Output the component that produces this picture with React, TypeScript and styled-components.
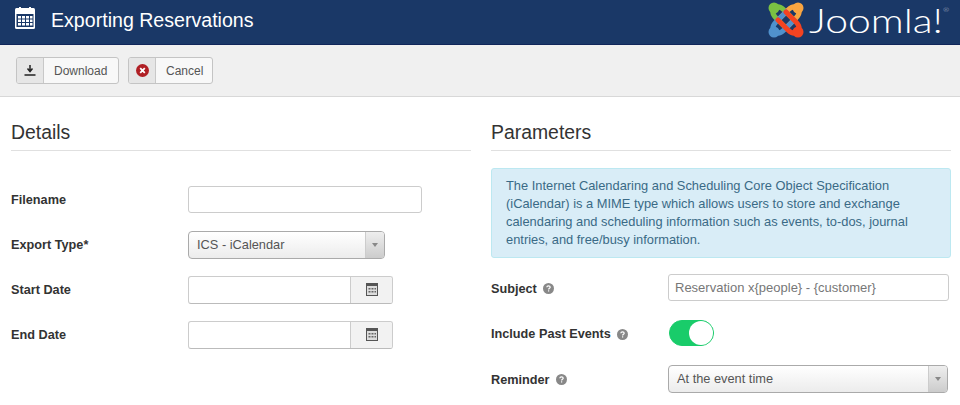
import React from "react";
import styled, { createGlobalStyle } from "styled-components";

const GlobalStyle = createGlobalStyle`
    html, body {
        margin: 0;
        padding: 0;
        background: #fff;
        overflow: hidden;
    }
    body {
        font-family: "Liberation Sans", Arial, sans-serif;
        font-size: 13px;
        color: #333;
    }
`;

const Page = styled.div`
    width: 960px;
    height: 405px;
    overflow: hidden;
`;

const Header = styled.header`
    height: 44px;
    background: #1a3867;
    border-bottom: 1px solid #10265a;
    display: flex;
    align-items: center;
    padding: 0 11px 0 15px;
`;

const PageIcon = styled.svg`
    width: 20px;
    height: 22px;
    margin-right: 16px;
    margin-top: -8px;
`;

const PageTitle = styled.h1`
    margin: -3px 0 0;
    font-size: 19.6px;
    font-weight: 400;
    color: #fff;
    flex: 1;
`;

const Logo = styled.div`
    display: flex;
    align-items: center;
    width: 181px;
    gap: 5px;
    margin-top: -5px;
`;

const LogoWord = styled.span`
    font-family: "Lato", sans-serif;
    font-weight: 300;
    font-size: 33px;
    line-height: 36px;
    color: #fff;
    position: relative;
    display: inline-block;
    transform: scaleX(1.24);
    transform-origin: left center;
`;

const LogoMark = styled.span`
    font-size: 6px;
    position: absolute;
    top: 5px;
    right: -5px;
    line-height: 1;
    color: #ccd;
`;

const Toolbar = styled.div`
    height: 52px;
    box-sizing: border-box;
    background: #f0f0f0;
    border-bottom: 1px solid #d8d8d8;
    display: flex;
    align-items: flex-start;
    gap: 9px;
    padding: 12px 16px 0;
`;

const ToolButton = styled.div<{ $width: number }>`
    width: ${(p) => p.$width}px;
    height: 27px;
    box-sizing: border-box;
    display: flex;
    background: #f8f8f8;
    border: 1px solid #c4c4c4;
    border-radius: 3px;
    font-size: 12px;
    color: #555;
`;

const ToolIcon = styled.span`
    width: 27px;
    box-sizing: border-box;
    display: flex;
    align-items: center;
    justify-content: center;
    background: #e6e6e6;
    border-right: 1px solid #c8c8c8;
    border-radius: 2px 0 0 2px;
`;

const ToolLabel = styled.span`
    display: flex;
    align-items: center;
    padding-left: 10px;
`;

const Columns = styled.main`
    display: grid;
    grid-template-columns: 460px 460px;
    column-gap: 20px;
    padding: 0 9px 0 11px;
`;

const Column = styled.section``;

const SectionTitle = styled.h2`
    margin: 0;
    height: 54px;
    box-sizing: border-box;
    padding-top: 24px;
    font-size: 19.4px;
    line-height: 22px;
    font-weight: 400;
    color: #333;
    border-bottom: 1px solid #e0e0e0;
`;

const DetailFields = styled.div`
    padding-top: 35px;
    display: flex;
    flex-direction: column;
    gap: 18px;
`;

const Field = styled.div`
    display: flex;
    align-items: center;
    height: 27px;
`;

const Label = styled.label<{ $width: number }>`
    width: ${(p) => p.$width}px;
    flex: none;
    font-size: 12.7px;
    font-weight: 700;
    color: #333;
    display: flex;
    align-items: center;
    gap: 6px;
`;

const ParamLabel = styled(Label)`
    margin-top: 2px;
`;

const TextBox = styled.div<{ $width: number }>`
    width: ${(p) => p.$width}px;
    height: 27px;
    box-sizing: border-box;
    background: #fff;
    border: 1px solid #ccc;
    border-radius: 3px;
    color: #777;
    padding: 0 6px;
    display: flex;
    align-items: center;
    font-size: 13px;
`;

const SelectBox = styled.div<{ $width: number }>`
    width: ${(p) => p.$width}px;
    height: 28px;
    box-sizing: border-box;
    display: flex;
    align-items: center;
    background: linear-gradient(#fff, #ececec);
    border: 1px solid #aaa;
    border-radius: 4px;
    color: #555;
    font-size: 12.8px;
    padding-left: 8px;
`;

const SelectValue = styled.span`
    flex: 1;
`;

const SelectArrow = styled.span`
    width: 18px;
    align-self: stretch;
    display: flex;
    align-items: center;
    justify-content: center;
    border-left: 1px solid #ccc;
    background: linear-gradient(#eee, #ccc);
    border-radius: 0 3px 3px 0;

    &::after {
        content: "";
        border-left: 3px solid transparent;
        border-right: 3px solid transparent;
        border-top: 4px solid #888;
    }
`;

const DateGroup = styled.div`
    width: 205px;
    height: 28px;
    box-sizing: border-box;
    display: flex;
    border: 1px solid #ccc;
    border-bottom-color: #bbb;
    border-radius: 3px;
    background: #fff;
`;

const DateInput = styled.div`
    flex: 1;
`;

const DateButton = styled.div`
    width: 41px;
    display: flex;
    align-items: center;
    justify-content: center;
    background: #f2f2f2;
    border-left: 1px solid #ccc;
    border-radius: 0 2px 2px 0;
`;

const Notice = styled.div`
    margin-top: 17px;
    height: 90px;
    box-sizing: border-box;
    background: #d9edf7;
    border: 1px solid #bce8f1;
    border-radius: 3px;
    padding: 8px 14px;
    font-size: 12.87px;
    line-height: 18px;
    color: #3a6a86;
`;

const ParamFields = styled.div`
    padding-top: 16px;
    display: flex;
    flex-direction: column;
    gap: 18.5px;
`;

const Toggle = styled.div`
    width: 45px;
    height: 26px;
    box-sizing: border-box;
    margin-left: 1px;
    border-radius: 13px;
    background: #19cc6a;
    border: 1px solid #19cc6a;
    display: flex;
    justify-content: flex-end;

    &::after {
        content: "";
        width: 24px;
        height: 24px;
        border-radius: 50%;
        background: #fff;
    }
`;

const CalendarGlyph = () => (
    <svg width="12" height="13" viewBox="0 0 12 13">
        <rect x="0" y="0" width="12" height="13" fill="#555" />
        <rect x="1" y="3" width="10" height="9" fill="#ddd" />
        <path d="M2.500 5h2v1.500h-2zM5.500 5h2v1.500h-2zM8.500 5h1.500v1.500H8.500zM2.500 8h2v1.500h-2zM5.500 8h2v1.500h-2zM8.500 8h1.500v1.500H8.500z" fill="#666" />
    </svg>
);

const HelpIcon = () => (
    <svg width="11" height="11" viewBox="0 0 11 11">
        <circle cx="5.500" cy="5.500" r="5.500" fill="#888" />
        <path d="M3.800 4.300C3.900 3.300 4.600 2.800 5.500 2.800 6.500 2.800 7.200 3.400 7.200 4.200 7.200 5.300 5.600 5.300 5.600 6.500" stroke="#fff" strokeWidth="1.200" fill="none" />
        <rect x="5" y="7.300" width="1.200" height="1.200" fill="#fff" />
    </svg>
);

const logoPetals = [
    { color: "#7ac143", angle: 0 },
    { color: "#f9a541", angle: 90 },
    { color: "#5091cd", angle: 270 },
    { color: "#f44321", angle: 180 },
];

const JoomlaMark = () => (
    <svg width="36" height="36" viewBox="0 0 36 36" fill="none" strokeLinecap="round" strokeWidth="5">
        {logoPetals.map((petal) => (
            <g key={petal.angle} transform={`rotate(${petal.angle} 18 18)`} stroke={petal.color}>
                <path d="M18 26 L8 16 Q3 11 6 6 Q11 3 16 8 L26 18" />
                <circle cx="6" cy="6" r="5.500" fill={petal.color} stroke="none" />
            </g>
        ))}
    </svg>
);

const App = () => (
    <Page>
        <GlobalStyle />
        <Header>
            <PageIcon viewBox="0 0 20 22">
                <rect x="0" y="1" width="20" height="21" rx="1.500" fill="#fff" />
                <rect x="4" y="0" width="2" height="4" fill="#fff" />
                <rect x="14" y="0" width="2" height="4" fill="#fff" />
                <rect x="1.500" y="7" width="17" height="13" fill="#1a3867" />
                <path d="M3 9h3v2.500H3zM7 9h3v2.500H7zM11 9h3v2.500h-3zM15 9h2.500v2.500H15zM3 12.500h3V15H3zM7 12.500h3V15H7zM11 12.500h3V15h-3zM15 12.500h2.500V15H15zM3 16h3v2.500H3zM7 16h3v2.500H7zM11 16h3v2.500h-3zM15 16h2.500v2.500H15z" fill="#fff" />
            </PageIcon>
            <PageTitle>Exporting Reservations</PageTitle>
            <Logo>
                <JoomlaMark />
                <LogoWord>
                    Joomla!
                    <LogoMark>®</LogoMark>
                </LogoWord>
            </Logo>
        </Header>
        <Toolbar>
            <ToolButton $width={103}>
                <ToolIcon>
                    <svg width="12" height="11" viewBox="0 0 12 11">
                        <path d="M6 0v5M3.500 3.500 6 6.500l2.500-3M0.500 10h11" stroke="#222" strokeWidth="1.500" fill="none" />
                    </svg>
                </ToolIcon>
                <ToolLabel>Download</ToolLabel>
            </ToolButton>
            <ToolButton $width={85}>
                <ToolIcon>
                    <svg width="13" height="13" viewBox="0 0 13 13">
                        <circle cx="6.500" cy="6.500" r="6.500" fill="#b01f24" />
                        <path d="M4.200 4.200l4.600 4.600M8.800 4.200l-4.600 4.600" stroke="#fff" strokeWidth="1.800" />
                    </svg>
                </ToolIcon>
                <ToolLabel>Cancel</ToolLabel>
            </ToolButton>
        </Toolbar>
        <Columns>
            <Column>
                <SectionTitle>Details</SectionTitle>
                <DetailFields>
                    <Field>
                        <Label $width={177}>Filename</Label>
                        <TextBox $width={234} />
                    </Field>
                    <Field>
                        <Label $width={177}>Export Type*</Label>
                        <SelectBox $width={197}>
                            <SelectValue>ICS - iCalendar</SelectValue>
                            <SelectArrow />
                        </SelectBox>
                    </Field>
                    <Field>
                        <Label $width={177}>Start Date</Label>
                        <DateGroup>
                            <DateInput />
                            <DateButton>
                                <CalendarGlyph />
                            </DateButton>
                        </DateGroup>
                    </Field>
                    <Field>
                        <Label $width={177}>End Date</Label>
                        <DateGroup>
                            <DateInput />
                            <DateButton>
                                <CalendarGlyph />
                            </DateButton>
                        </DateGroup>
                    </Field>
                </DetailFields>
            </Column>
            <Column>
                <SectionTitle>Parameters</SectionTitle>
                <Notice>
                    The Internet Calendaring and Scheduling Core Object Specification
                    (iCalendar) is a MIME type which allows users to store and exchange
                    calendaring and scheduling information such as events, to-dos, journal
                    entries, and free/busy information.
                </Notice>
                <ParamFields>
                    <Field>
                        <ParamLabel $width={177}>
                            Subject <HelpIcon />
                        </ParamLabel>
                        <TextBox $width={281}>Reservation x{"{people}"} - {"{customer}"}</TextBox>
                    </Field>
                    <Field>
                        <ParamLabel $width={177}>
                            Include Past Events <HelpIcon />
                        </ParamLabel>
                        <Toggle />
                    </Field>
                    <Field>
                        <ParamLabel $width={177}>
                            Reminder <HelpIcon />
                        </ParamLabel>
                        <SelectBox $width={280}>
                            <SelectValue>At the event time</SelectValue>
                            <SelectArrow />
                        </SelectBox>
                    </Field>
                </ParamFields>
            </Column>
        </Columns>
    </Page>
);

export default App;
